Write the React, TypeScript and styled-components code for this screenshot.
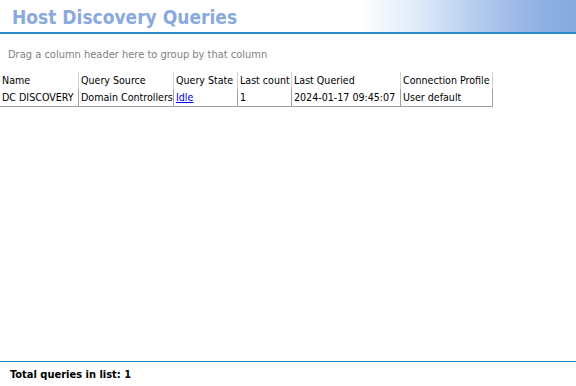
import React from "react";
import styled, { createGlobalStyle } from "styled-components";

const Global = createGlobalStyle`
  html, body { margin: 0; padding: 0; background: #fff; }
  body { font-family: "DejaVu Sans Condensed", "DejaVu Sans", sans-serif; font-stretch: condensed; }
`;

const Page = styled.div`
  width: 576px;
  height: 386px;
  display: flex;
  flex-direction: column;
  overflow: hidden;
`;

const Header = styled.div`
  height: 34px;
  box-sizing: border-box;
  border-bottom: 2px solid #2a8bcb;
  display: flex;
  align-items: center;
  padding: 1px 0 0 12px;
  background: linear-gradient(90deg, #ffffff 0%, #ffffff 62%, #e2ecf9 72%, #b4cbee 83%, #8fb0e2 94%, #86a9de 100%);
`;

const Title = styled.h1`
  margin: 0;
  font-family: "DejaVu Sans Condensed", "DejaVu Sans", sans-serif;
  font-stretch: condensed;
  font-weight: bold;
  font-size: 19px;
  color: #8aa9de;
`;

const GroupPanel = styled.div`
  height: 38px;
  box-sizing: border-box;
  display: flex;
  align-items: center;
  padding: 2px 0 0 8px;
  font-size: 11px;
  color: #7f7f7f;
`;

const Table = styled.div`
  display: grid;
  grid-template-columns: 79px 95px 64px 54px 109px 92px;
  width: 493px;
  font-size: 10.6px;
  color: #000;
`;

const HeadCell = styled.div`
  height: 17px;
  line-height: 17px;
  padding-left: 2px;
  border-right: 1px solid #d4d0c8;
  white-space: nowrap;
  overflow: hidden;
`;

const Cell = styled.div`
  height: 17px;
  line-height: 17px;
  padding-left: 2px;
  border-right: 1px solid #a0a0a0;
  border-bottom: 1px solid #a0a0a0;
  white-space: nowrap;
  overflow: hidden;
`;

const Link = styled.a`
  color: #0000ee;
  text-decoration: underline;
`;

const Spacer = styled.div`
  flex: 1;
`;

const Footer = styled.div`
  height: 25px;
  box-sizing: border-box;
  border-top: 1px solid #1f84c6;
  display: flex;
  align-items: center;
  padding-left: 10px;
  font-size: 11px;
  font-weight: bold;
  color: #000;
`;

const columns = ["Name", "Query Source", "Query State", "Last count", "Last Queried", "Connection Profile"];

export default function App() {
  return (
    <>
      <Global />
      <Page>
        <Header>
          <Title>Host Discovery Queries</Title>
        </Header>
        <GroupPanel>Drag a column header here to group by that column</GroupPanel>
        <Table>
          {columns.map((c) => (
            <HeadCell key={c}>{c}</HeadCell>
          ))}
          <Cell>DC DISCOVERY</Cell>
          <Cell>Domain Controllers</Cell>
          <Cell>
            <Link href="#">Idle</Link>
          </Cell>
          <Cell>1</Cell>
          <Cell>2024-01-17 09:45:07</Cell>
          <Cell>User default</Cell>
        </Table>
        <Spacer />
        <Footer>Total queries in list: 1</Footer>
      </Page>
    </>
  );
}
